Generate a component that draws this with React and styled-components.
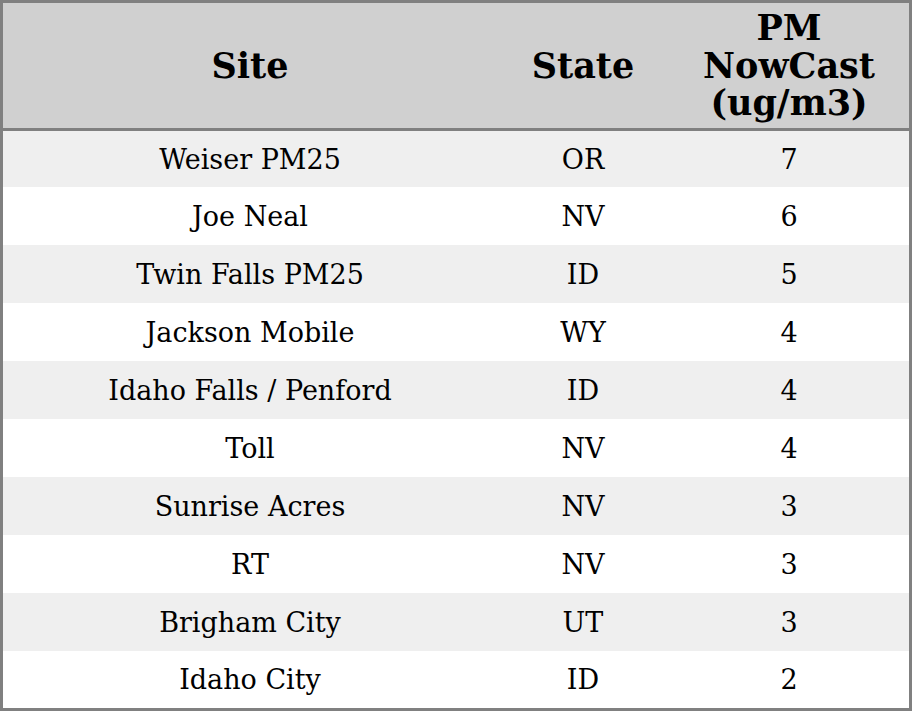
import styled, { createGlobalStyle } from 'styled-components';

const GlobalStyle = createGlobalStyle`
	html, body {
		margin: 0;
		padding: 0;
		background: #ffffff;
	}
`;

const Table = styled.table`
	width: 912px;
	height: 711px;
	border-collapse: separate;
	border-spacing: 0;
	border: 3px solid #808080;
	box-sizing: border-box;
	font-family: "DejaVu Serif", serif;
	color: #000;
	table-layout: fixed;
`;

const HeadCell = styled.th`
	background: #d0d0d0;
	height: 125px;
	padding: 0;
	font-size: 35px;
	line-height: 37.5px;
	font-weight: bold;
	text-align: center;
	vertical-align: middle;
	border-bottom: 3px solid #808080;
	width: ${(p) => p.$width}px;
`;

const Row = styled.tr`
	height: 58px;
	background: ${(p) => (p.$odd ? '#efefef' : '#ffffff')};

	&:first-child {
		height: 56px;
	}

	&:last-child {
		height: 57px;
	}
`;

const Cell = styled.td`
	padding: 0;
	font-size: 27px;
	text-align: center;
	vertical-align: middle;
`;

const rows = [
	['Weiser PM25', 'OR', 7],
	['Joe Neal', 'NV', 6],
	['Twin Falls PM25', 'ID', 5],
	['Jackson Mobile', 'WY', 4],
	['Idaho Falls / Penford', 'ID', 4],
	['Toll', 'NV', 4],
	['Sunrise Acres', 'NV', 3],
	['RT', 'NV', 3],
	['Brigham City', 'UT', 3],
	['Idaho City', 'ID', 2],
];

const App = () => (
	<>
		<GlobalStyle />
		<Table>
			<thead>
				<tr>
					<HeadCell $width={494}>Site</HeadCell>
					<HeadCell $width={172}>State</HeadCell>
					<HeadCell $width={240}>PM<br />NowCast<br />(ug/m3)</HeadCell>
				</tr>
			</thead>
			<tbody>
				{rows.map(([site, state, value], i) => (
					<Row key={site} $odd={i % 2 === 0}>
						<Cell>{site}</Cell>
						<Cell>{state}</Cell>
						<Cell>{value}</Cell>
					</Row>
				))}
			</tbody>
		</Table>
	</>
);

export default App;
